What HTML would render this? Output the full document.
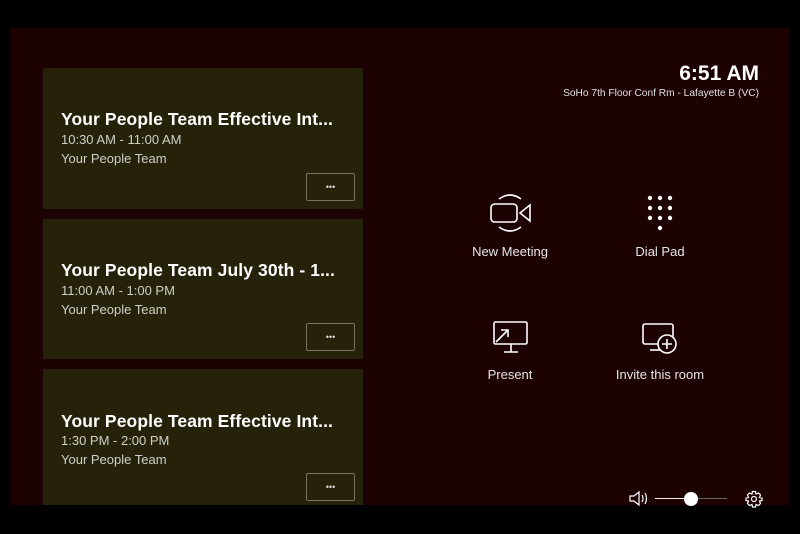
<!DOCTYPE html>
<html><head><meta charset="utf-8"><style>
*{margin:0;padding:0;box-sizing:border-box}
body{width:800px;height:534px;background:#000;position:relative;overflow:hidden;font-family:"Liberation Sans",sans-serif;color:#fff}
.main{position:absolute;left:10px;top:28px;width:780px;height:477px;background:#1d0204}
.card{position:absolute;left:43px;width:320px;background:#252209}
.t{position:absolute;left:18px;font-size:17.5px;font-weight:bold;white-space:nowrap;letter-spacing:0.1px}
.s{position:absolute;left:18px;font-size:13px;color:#cfcfc8}
.btn{position:absolute;left:263px;width:49px;height:28px;border:1px solid #77735f;border-radius:2px;font-size:9px;text-align:center;line-height:27px;color:#ddd}
.lbl{position:absolute;font-size:13px;color:#e6e6e6;text-align:center;width:140px}
svg{position:absolute}
</style></head><body>
<div class="main"></div>
<div class="card" style="top:68px;height:141px">
<div class="t" style="top:41px">Your People Team Effective Int...</div>
<div class="s" style="top:64px">10:30 AM - 11:00 AM</div>
<div class="s" style="top:83px">Your People Team</div>
<div class="btn" style="top:105px">•••</div></div>
<div class="card" style="top:219px;height:140px">
<div class="t" style="top:41px">Your People Team July 30th - 1...</div>
<div class="s" style="top:64px">11:00 AM - 1:00 PM</div>
<div class="s" style="top:83px">Your People Team</div>
<div class="btn" style="top:104px">•••</div></div>
<div class="card" style="top:369px;height:136px">
<div class="t" style="top:42px">Your People Team Effective Int...</div>
<div class="s" style="top:64px">1:30 PM - 2:00 PM</div>
<div class="s" style="top:83px">Your People Team</div>
<div class="btn" style="top:104px">•••</div></div>

<div style="position:absolute;right:41px;top:62px;font-size:21px;font-weight:bold">6:51 AM</div>
<div style="position:absolute;right:41px;top:88px;font-size:10.2px;color:#e0e0e0">SoHo 7th Floor Conf Rm - Lafayette B (VC)</div>

<svg style="left:485px;top:190px" width="50" height="45" viewBox="485 190 50 45" fill="none" stroke="#fff" stroke-width="1.6">
<rect x="491" y="204" width="26" height="18" rx="3.5"/>
<path d="M530 205 L520 213 L530 221 Z"/>
<path d="M499 199 Q510 191 521 199"/><path d="M499 227 Q510 235 521 227"/>
</svg>
<div class="lbl" style="left:440px;top:244px">New Meeting</div>

<svg style="left:640px;top:190px" width="40" height="45" fill="#fff">
<circle cx="10" cy="8" r="2.2"/><circle cx="20" cy="8" r="2.2"/><circle cx="30" cy="8" r="2.2"/>
<circle cx="10" cy="18" r="2.2"/><circle cx="20" cy="18" r="2.2"/><circle cx="30" cy="18" r="2.2"/>
<circle cx="10" cy="28" r="2.2"/><circle cx="20" cy="28" r="2.2"/><circle cx="30" cy="28" r="2.2"/>
<circle cx="20" cy="38" r="2.2"/>
</svg>
<div class="lbl" style="left:590px;top:244px">Dial Pad</div>

<svg style="left:490px;top:318px" width="42" height="36" fill="none" stroke="#fff" stroke-width="1.6">
<rect x="4" y="4" width="33" height="22" rx="1.5"/>
<path d="M14 34 H28 M21 26 V34"/>
<path d="M6 24 L18 12 M11 12 H18 V19"/>
</svg>
<div class="lbl" style="left:440px;top:367px">Present</div>

<svg style="left:640px;top:320px" width="42" height="38" fill="none" stroke="#fff" stroke-width="1.6">
<rect x="3" y="4" width="30" height="20" rx="2"/>
<path d="M10 30 H20"/>
<circle cx="27" cy="24" r="9" fill="#1d0204"/>
<path d="M27 19 V29 M22 24 H32"/>
</svg>
<div class="lbl" style="left:590px;top:367px">Invite this room</div>

<svg style="left:628px;top:490px" width="22" height="18" fill="none" stroke="#fff" stroke-width="1.2">
<path d="M2 6 H6 L11 2 V15 L6 11 H2 Z"/><path d="M14 5 Q16 8.5 14 12 M17 3 Q20 8.5 17 14"/>
</svg>
<div style="position:absolute;left:655px;top:498px;width:36px;height:1px;background:#eee"></div>
<div style="position:absolute;left:691px;top:498px;width:36px;height:1px;background:#666"></div>
<div style="position:absolute;left:684px;top:492px;width:14px;height:14px;border-radius:50%;background:#fff"></div>
<svg style="left:744px;top:490px" width="20" height="18" fill="none" stroke="#fff" stroke-width="1.2">
<circle cx="10" cy="9" r="2.5"/>
<path d="M8.5 1.5 H11.5 L12 4 L14.5 3 L16.5 5 L15.5 7.5 L18 8 V10.5 L15.5 11 L16.5 13.5 L14.5 15.5 L12 14.5 L11.5 17 H8.5 L8 14.5 L5.5 15.5 L3.5 13.5 L4.5 11 L2 10.5 V8 L4.5 7.5 L3.5 5 L5.5 3 L8 4 Z"/>
</svg>
</body></html>
